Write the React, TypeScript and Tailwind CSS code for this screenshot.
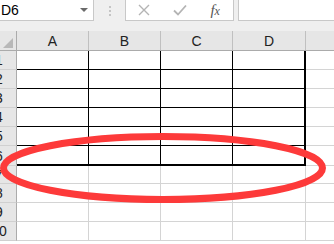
import React from "react";

const cols = ["A", "B", "C", "D"];
const colW = ["w-[72px]", "w-[72px]", "w-[72px]", "w-[73px]"];
const rowH = ["h-[19px]", "h-[19px]", "h-[19px]", "h-[19px]", "h-[19px]", "h-[20px]", "h-[18px]", "h-[19px]", "h-[19px]", "h-[19px]"];

function cellClass(r: number, c: number): string {
  const inData = r < 6;
  const w = colW[c];
  if (inData) {
    if (c === 3 && r === 5) return `${w} shrink-0 border-r-2 border-b-2 border-black`;
    if (c === 3) return `${w} shrink-0 border-r-2 border-b border-black`;
    if (r === 5) return `${w} shrink-0 border-r border-b-2 border-black`;
    return `${w} shrink-0 border-r border-b border-black`;
  }
  return `${w} shrink-0 border-r border-b border-[#d4d4d4]`;
}

export default function App() {
  return (
    <div className="relative w-[334px] h-[244px] overflow-hidden bg-white font-['Liberation_Sans',Arial,sans-serif] text-[14px] leading-none">
      {/* toolbar */}
      <div className="flex h-[31px] bg-[#efefef] items-start">
        <div className="w-[94px] h-[21px] bg-white border-r border-b border-[#c8c8c8] flex items-center justify-between pl-[1px] pr-[5px] shrink-0">
          <span className="text-black text-[14px]">D6</span>
          <svg width="8" height="5" viewBox="0 0 8 5">
            <path d="M0 0 L8 0 L4 4 Z" fill="#6a6a6a" />
          </svg>
        </div>
        <div className="w-[31px] h-[21px] flex flex-col items-center justify-center gap-[2px] shrink-0">
          <div className="w-[2px] h-[2px] bg-[#c4c4c4]" />
          <div className="w-[2px] h-[2px] bg-[#c4c4c4]" />
          <div className="w-[2px] h-[2px] bg-[#c4c4c4]" />
        </div>
        <div className="w-[109px] h-[21px] bg-white border-l border-r border-b border-[#c8c8c8] flex items-center shrink-0">
          <div className="w-[36px] flex justify-center">
            <svg width="12" height="12" viewBox="0 0 12 12">
              <path d="M1 1 L11 11 M11 1 L1 11" stroke="#b4b4b4" strokeWidth="1.4" />
            </svg>
          </div>
          <div className="w-[36px] flex justify-center">
            <svg width="14" height="12" viewBox="0 0 14 12">
              <path d="M1 6.5 L5 10.5 L13 1.5" stroke="#b4b4b4" strokeWidth="1.8" fill="none" />
            </svg>
          </div>
          <div className="w-[36px] flex justify-center">
            <span className="font-['Liberation_Serif',serif] italic text-[15px] text-[#555]">
              f<span className="text-[12px]">x</span>
            </span>
          </div>
        </div>
        <div className="w-[4px] shrink-0" />
        <div className="flex-1 h-[21px] bg-white border-l border-b border-[#c8c8c8]" />
      </div>

      {/* column header */}
      <div className="flex h-[20px] bg-[#e6e6e6] border-b border-[#ababab]">
        <div className="w-[17px] shrink-0 border-r border-[#ababab] relative flex items-end justify-end pr-[3px] pb-[2px]">
          <svg width="10" height="10" viewBox="0 0 10 10">
            <path d="M10 0 L10 10 L0 10 Z" fill="#b8b8b8" />
          </svg>
        </div>
        {cols.map((c, i) => (
          <div
            key={c}
            className={`${colW[i]} shrink-0 border-r border-[#c0c0c0] flex items-center justify-center text-[#222] pt-[1px]`}
          >
            {c}
          </div>
        ))}
        <div className="flex-1" />
      </div>

      {/* rows */}
      {rowH.map((h, r) => (
        <div key={r} className={`flex ${h}`}>
          <div className="w-[17px] shrink-0 bg-[#e6e6e6] border-r border-b border-r-[#ababab] border-b-[#d0d0d0] overflow-hidden">
            <div className="w-[24px] ml-[-13px] h-full flex items-center justify-center text-[#222]">
              {r + 1}
            </div>
          </div>
          {cols.map((c, i) => (
            <div key={c} className={cellClass(r, i)} />
          ))}
          <div className="flex-1 border-b border-[#d4d4d4]" />
        </div>
      ))}

      {/* red ellipse annotation */}
      <svg className="absolute left-0 top-0 pointer-events-none" width="334" height="244" viewBox="0 0 334 244">
        <ellipse cx="163" cy="168" rx="159.5" ry="31.5" fill="none" stroke="#fd3a3a" strokeWidth="7" />
      </svg>
    </div>
  );
}
